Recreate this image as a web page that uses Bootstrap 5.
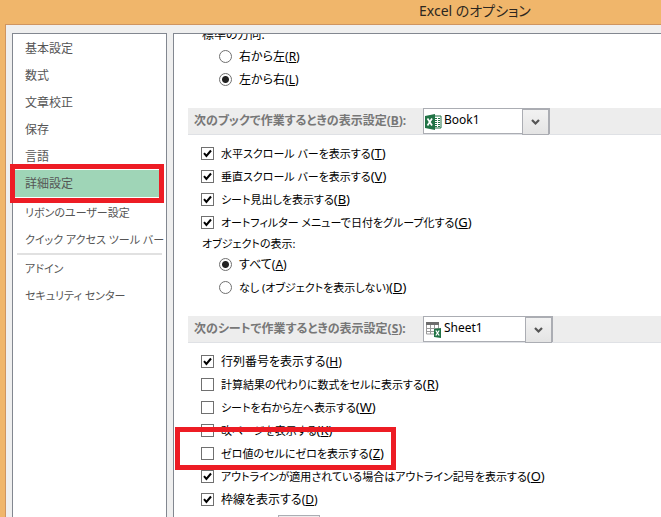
<!DOCTYPE html>
<html lang="ja">
<head>
<meta charset="utf-8">
<meta name="viewport" content="width=device-width, initial-scale=1">
<title>Excel のオプション</title>
<link href="https://cdn.jsdelivr.net/npm/bootstrap@5.3.0/dist/css/bootstrap.min.css" rel="stylesheet">
<style>
body{font-family:"Noto Sans","Noto Sans CJK JP",sans-serif;font-size:12px;line-height:23px;font-feature-settings:"palt";color:#000;background:#f0b66b}
.titlebar{height:24px;line-height:21px;font-size:14px;color:#2d2720;padding-left:419px}
.dialog-body{margin-left:5px;padding:8px 0 0 6px;gap:6px;background:#efefef;border-top:1px solid #cf9560;border-left:1px solid #cf9560;min-height:0}
.side{width:155px;border:1px solid #828790;border-bottom:0;padding-top:1px}
.side a{display:block;height:27px;line-height:27px;padding-left:12px;color:#555;text-decoration:none;white-space:nowrap}
.side .current{background:#9fd5b7;margin-right:2px}
.side .current::after{content:"";position:absolute;left:-3px;right:2px;top:130px;height:39px;border:5px solid #ed1c24}
.side .after-mark{margin-top:2px}
.side hr{margin:0 4px;border-top:2px solid #e1e1e1;opacity:1}
.kana,.side .kana{font-size:11px}
.options{border:1px solid #828790;border-width:1px 0 0 1px;padding-left:14px;min-width:0}
.scrolled{margin-top:-9px}
.plain-label{padding-left:14px;height:20px;line-height:20px}
.plain-label.kana{height:19px}
.opt{display:flex;align-items:center;height:23px;padding-left:13px;white-space:nowrap}
.opt.sub{padding-left:31px}
.opt input{appearance:none;flex:none;width:13px;height:13px;margin:0 7px 0 0;border:1px solid #707070;background:#fff}
.opt input[type=radio]{border-radius:50%}
.opt input[type=radio]:checked{background:radial-gradient(circle,#222 3px,#fff 4px)}
.opt input[type=checkbox]:checked{background:#fff url("data:image/svg+xml,%3Csvg xmlns='http://www.w3.org/2000/svg' viewBox='0 0 11 11'%3E%3Cpath d='M2 5.2L4.4 8L9 2.5' fill='none' stroke='%23000' stroke-width='2'/%3E%3C/svg%3E")}
.hotkey{font-size:13px;line-height:20px}
.group{padding-top:7px}
.section-bar{height:27px;margin-top:17px;background:#ededed;border-bottom:1px solid #dfe1e5;padding-left:6px;color:#777;font-weight:bold}
.section-bar label{width:229px;line-height:25px;white-space:nowrap}
.picker{display:grid;grid-template-columns:20px 1fr 27px;width:127px;height:26px;border:1px solid #abadb3;background:#fff;align-items:center}
.picker.wide{width:130px}
.picker select{grid-area:1/1/2/4;appearance:none;border:0;background:transparent;height:22px;align-self:start;padding:0 0 0 20px;color:#000;font-size:12px;line-height:20px}
.picker svg{grid-row:1;pointer-events:none}
.picker .arrow{grid-column:3;width:27px;height:26px;border:1px solid #abadb3;background:linear-gradient(#f2f2f2,#e4e4e4);z-index:1}
.picker .icon{grid-column:1;margin-left:1px}
.marked{width:221px;height:43px;left:1px;border:5px solid #ed1c24;top:-15px;pointer-events:none}
.row-wrap{margin-left:-14px;padding-left:14px}
.color-pick{width:42px;height:24px;margin-left:90px;border:1px solid #abadb3;background:#ededed}
</style>
</head>
<body class="vh-100 d-flex flex-column overflow-hidden">
<header class="titlebar text-nowrap flex-shrink-0">Excel のオプション</header>
<div class="dialog-body d-flex flex-grow-1">
<nav class="side bg-white flex-shrink-0 position-relative">
<a href="#">基本設定</a>
<a href="#">数式</a>
<a href="#">文章校正</a>
<a href="#">保存</a>
<a href="#">言語</a>
<a href="#" class="current" aria-current="page">詳細設定</a>
<a href="#" class="after-mark kana">リボンのユーザー設定</a>
<a href="#" class="kana">クイック アクセス ツール バー</a>
<hr>
<a href="#" class="kana">アドイン</a>
<a href="#" class="kana">セキュリティ センター</a>
</nav>
<main class="options bg-white flex-grow-1 overflow-hidden">
<div class="scrolled">
<div class="plain-label">標準の方向:</div>
<label class="opt sub"><input type="radio" name="direction"><span>右から左(<u>R</u>)</span></label>
<label class="opt sub"><input type="radio" name="direction" checked><span>左から右(<u>L</u>)</span></label>
<div class="section-bar d-flex"><label for="book">次のブックで作業するときの表示設定(<u>B</u>):</label>
<div class="picker">
<select id="book"><option>Book1</option></select>
<svg class="icon" width="17" height="16" viewBox="0 0 17 16"><path d="M8 2h8v12H8z" fill="#fff" stroke="#217346"/><path d="M10 4h2v1h-2zM13 4h2v1h-2zM10 6h2v1h-2zM13 6h2v1h-2zM10 8h2v1h-2zM13 8h2v1h-2zM10 10h2v1h-2zM13 10h2v1h-2zM10 12h2v1h-2zM13 12h2v1h-2z" fill="#217346"/><path d="M0 2L10 0v16L0 14z" fill="#217346"/><path d="M2.5 4.5L7 11.5M7 4.5L2.5 11.5" stroke="#fff" stroke-width="1.7"/></svg>
<svg class="arrow" viewBox="0 0 25 24"><path d="M9 10l3.500 3.500L16 10" fill="none" stroke="#555" stroke-width="2.200"/></svg>
</div></div>
<div class="group">
<label class="opt kana"><input type="checkbox" checked><span>水平スクロール バーを表示する<span class="hotkey">(<u>T</u>)</span></span></label>
<label class="opt kana"><input type="checkbox" checked><span>垂直スクロール バーを表示する<span class="hotkey">(<u>V</u>)</span></span></label>
<label class="opt kana"><input type="checkbox" checked><span>シート見出しを表示する<span class="hotkey">(<u>B</u>)</span></span></label>
<label class="opt kana"><input type="checkbox" checked><span>オートフィルター メニューで日付をグループ化する<span class="hotkey">(<u>G</u>)</span></span></label>
<div class="plain-label kana">オブジェクトの表示:</div>
<label class="opt sub"><input type="radio" name="objects" checked><span>すべて(<u>A</u>)</span></label>
<label class="opt sub kana"><input type="radio" name="objects"><span>なし (オブジェクトを表示しない)<span class="hotkey">(<u>D</u>)</span></span></label>
</div>
<div class="section-bar d-flex"><label for="sheet">次のシートで作業するときの表示設定(<u>S</u>):</label>
<div class="picker wide">
<select id="sheet"><option>Sheet1</option></select>
<svg class="icon" width="17" height="16" viewBox="0 0 17 16"><path d="M1 0h13v3H1z" fill="#6d6d6d"/><path d="M1.500 3v9H10M1.500 6.500h12M1.500 9.500H10M5.500 3v9M9.500 3v5M13.500 3v4" fill="none" stroke="#999"/><path d="M9 7l7-1v10l-7-1z" fill="#217346"/><path d="M10.800 8.500l3.400 5M14.200 8.500l-3.400 5" stroke="#fff" stroke-width="1.300"/></svg>
<svg class="arrow" viewBox="0 0 25 24"><path d="M9 10l3.500 3.500L16 10" fill="none" stroke="#555" stroke-width="2.200"/></svg>
</div></div>
<div class="group">
<label class="opt"><input type="checkbox" checked><span>行列番号を表示する(<u>H</u>)</span></label>
<label class="opt kana"><input type="checkbox"><span>計算結果の代わりに数式をセルに表示する<span class="hotkey">(<u>R</u>)</span></span></label>
<label class="opt kana"><input type="checkbox"><span>シートを右から左へ表示する<span class="hotkey">(<u>W</u>)</span></span></label>
<label class="opt kana"><input type="checkbox"><span>改ページを表示する<span class="hotkey">(<u>K</u>)</span></span></label>
<div class="row-wrap position-relative"><label class="opt kana"><input type="checkbox"><span>ゼロ値のセルにゼロを表示する<span class="hotkey">(<u>Z</u>)</span></span></label><div class="marked position-absolute"></div></div>
<label class="opt kana"><input type="checkbox" checked><span>アウトラインが適用されている場合はアウトライン記号を表示する<span class="hotkey">(<u>O</u>)</span></span></label>
<label class="opt"><input type="checkbox" checked><span>枠線を表示する(<u>D</u>)</span></label>
<button type="button" class="color-pick d-block mt-1" aria-label="枠線の色"></button>
</div>
</div>
</main>
</div>
<script src="https://cdn.jsdelivr.net/npm/bootstrap@5.3.0/dist/js/bootstrap.bundle.min.js"></script>
</body>
</html>
